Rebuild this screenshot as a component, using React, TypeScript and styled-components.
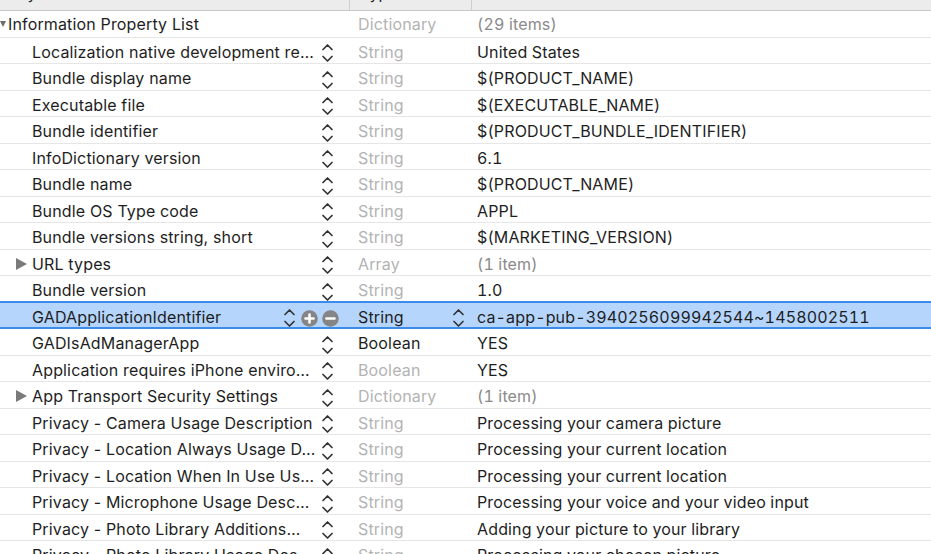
import React from 'react';
import styled, { createGlobalStyle } from 'styled-components';

const GlobalStyle = createGlobalStyle`
  html, body {
    margin: 0;
    padding: 0;
    background: #ffffff;
    overflow: hidden;
  }
  body {
    font-family: Inter, "Noto Sans", "Liberation Sans", sans-serif;
    -webkit-font-smoothing: antialiased;
  }
`;

type Kind = 'root' | 'leaf' | 'group';

interface IEntry {
  key: string;
  type: string;
  value: string;
  kind: Kind;
  typeStrong?: boolean;
  valueMuted?: boolean;
  selected?: boolean;
}

const entries: IEntry[] = [
  { key: 'Information Property List', type: 'Dictionary', value: '(29 items)', kind: 'root', valueMuted: true },
  { key: 'Localization native development re…', type: 'String', value: 'United States', kind: 'leaf' },
  { key: 'Bundle display name', type: 'String', value: '$(PRODUCT_NAME)', kind: 'leaf' },
  { key: 'Executable file', type: 'String', value: '$(EXECUTABLE_NAME)', kind: 'leaf' },
  { key: 'Bundle identifier', type: 'String', value: '$(PRODUCT_BUNDLE_IDENTIFIER)', kind: 'leaf' },
  { key: 'InfoDictionary version', type: 'String', value: '6.1', kind: 'leaf' },
  { key: 'Bundle name', type: 'String', value: '$(PRODUCT_NAME)', kind: 'leaf' },
  { key: 'Bundle OS Type code', type: 'String', value: 'APPL', kind: 'leaf' },
  { key: 'Bundle versions string, short', type: 'String', value: '$(MARKETING_VERSION)', kind: 'leaf' },
  { key: 'URL types', type: 'Array', value: '(1 item)', kind: 'group', valueMuted: true },
  { key: 'Bundle version', type: 'String', value: '1.0', kind: 'leaf' },
  {
    key: 'GADApplicationIdentifier',
    type: 'String',
    value: 'ca-app-pub-3940256099942544~1458002511',
    kind: 'leaf',
    typeStrong: true,
    selected: true
  },
  { key: 'GADIsAdManagerApp', type: 'Boolean', value: 'YES', kind: 'leaf', typeStrong: true },
  { key: 'Application requires iPhone enviro…', type: 'Boolean', value: 'YES', kind: 'leaf' },
  { key: 'App Transport Security Settings', type: 'Dictionary', value: '(1 item)', kind: 'group', valueMuted: true },
  { key: 'Privacy - Camera Usage Description', type: 'String', value: 'Processing your camera picture', kind: 'leaf' },
  { key: 'Privacy - Location Always Usage D…', type: 'String', value: 'Processing your current location', kind: 'leaf' },
  { key: 'Privacy - Location When In Use Us…', type: 'String', value: 'Processing your current location', kind: 'leaf' },
  {
    key: 'Privacy - Microphone Usage Desc…',
    type: 'String',
    value: 'Processing your voice and your video input',
    kind: 'leaf'
  },
  { key: 'Privacy - Photo Library Additions…', type: 'String', value: 'Adding your picture to your library', kind: 'leaf' },
  { key: 'Privacy - Photo Library Usage Des…', type: 'String', value: 'Processing your chosen picture', kind: 'leaf' }
];

const Chevrons = () => (
  <svg width="13" height="24" viewBox="0 0 13 24" fill="none" stroke="#333333" strokeWidth="1.7" strokeLinecap="round" strokeLinejoin="round">
    <path d="M2 8.5 L6.5 4 L11 8.5" />
    <path d="M2 15.5 L6.5 20 L11 15.5" />
  </svg>
);

const RoundButton = ({ sign }: { sign: 'plus' | 'minus' }) => (
  <svg width="17" height="17" viewBox="0 0 17 17">
    <circle cx="8.5" cy="8.5" r="8.3" fill="#858585" />
    <path d={sign === 'plus' ? 'M4.5 8.5 H12.5 M8.5 4.5 V12.5' : 'M4.5 8.5 H12.5'} stroke="#ffffff" strokeWidth="2.6" strokeLinecap="round" />
  </svg>
);

const PlistEditor: React.FC = () => {
  return (
    <Editor>
      <Header>
        <HeaderCell>Key</HeaderCell>
        <HeaderCell divided>Type</HeaderCell>
        <HeaderCell divided>Value</HeaderCell>
      </Header>
      {entries.map(entry => (
        <Row key={entry.key} selected={entry.selected}>
          <KeyCell>
            <Disclosure indent={entry.kind === 'root' ? 0 : 16}>
              {entry.kind === 'root' && <DownTriangle />}
              {entry.kind === 'group' && <RightTriangle />}
            </Disclosure>
            <KeyText indent={entry.kind === 'root' ? 8 : 32}>{entry.key}</KeyText>
            {entry.kind !== 'root' && (
              <Controls wide={entry.selected}>
                <Chevrons />
                {entry.selected && (
                  <>
                    <RoundButton sign="plus" />
                    <RoundButton sign="minus" />
                  </>
                )}
              </Controls>
            )}
          </KeyCell>
          <TypeCell strong={entry.typeStrong}>
            <span>{entry.type}</span>
            {entry.selected && (
              <TypeStepper>
                <Chevrons />
              </TypeStepper>
            )}
          </TypeCell>
          <ValueCell muted={entry.valueMuted}>{entry.value}</ValueCell>
        </Row>
      ))}
    </Editor>
  );
};

const Editor = styled.div`
  width: 931px;
  height: 554px;
  overflow: hidden;
  font-size: 16px;
  letter-spacing: 0.15px;
  color: #1e1e1e;
`;

const Header = styled.div`
  display: grid;
  grid-template-columns: 349px 122px 1fr;
  height: 11px;
  background: #ececec;
  border-bottom: 1px solid #c9c9c9;
  box-sizing: border-box;
  overflow: hidden;
  color: #2a2a2a;
  font-size: 16px;
`;

const HeaderCell = styled.div<{ divided?: boolean }>`
  border-left: ${props => (props.divided ? '1px solid #cfcfcf' : 'none')};
  padding-left: ${props => (props.divided ? '10px' : '8px')};
  line-height: 16px;
  margin-top: -15px;
  height: 40px;
`;

const Row = styled.div<{ selected?: boolean }>`
  display: grid;
  grid-template-columns: 349px 122px 1fr;
  align-items: center;
  height: 26.5px;
  padding-top: 0.5px;
  box-sizing: border-box;
  background: ${props => (props.selected ? '#b5d5fc' : '#ffffff')};
  border-bottom: ${props => (props.selected ? '2px solid #3b8cea' : '1.5px solid #e6e6e6')};
  ${props => props.selected && 'box-shadow: 0 -2px 0 #3b8cea;'}
`;

const KeyCell = styled.div`
  position: relative;
  display: flex;
  align-items: center;
  height: 100%;
`;

const Disclosure = styled.div<{ indent: number }>`
  position: absolute;
  left: ${props => props.indent}px;
  top: 0;
  bottom: 0;
  display: flex;
  align-items: center;
`;

const DownTriangle = styled.span`
  width: 0;
  height: 0;
  border-left: 3px solid transparent;
  border-right: 3px solid transparent;
  border-top: 6px solid #6e6e6e;
`;

const RightTriangle = styled.span`
  width: 0;
  height: 0;
  border-top: 6px solid transparent;
  border-bottom: 6px solid transparent;
  border-left: 11px solid #7a7a7a;
`;

const KeyText = styled.span<{ indent: number }>`
  padding-left: ${props => props.indent}px;
  white-space: nowrap;
  flex: 1;
`;

const Controls = styled.div<{ wide?: boolean }>`
  display: flex;
  align-items: center;
  gap: 4px;
  padding-right: ${props => (props.wide ? '10px' : '14px')};
  margin-top: 3px;
  svg:first-child {
    margin-right: 1px;
  }
`;

const TypeCell = styled.div<{ strong?: boolean }>`
  display: flex;
  align-items: center;
  justify-content: space-between;
  padding-left: 9px;
  padding-right: 6px;
  color: ${props => (props.strong ? '#1e1e1e' : '#b3b3b3')};
  white-space: nowrap;
`;

const TypeStepper = styled.div`
  display: flex;
  align-items: center;
  margin-top: 2px;
`;

const ValueCell = styled.div<{ muted?: boolean }>`
  padding-left: 6px;
  white-space: nowrap;
  font-variant-numeric: tabular-nums;
  color: ${props => (props.muted ? '#8a8a8a' : '#1e1e1e')};
`;

const App: React.FC = () => (
  <>
    <GlobalStyle />
    <PlistEditor />
  </>
);

export default App;
